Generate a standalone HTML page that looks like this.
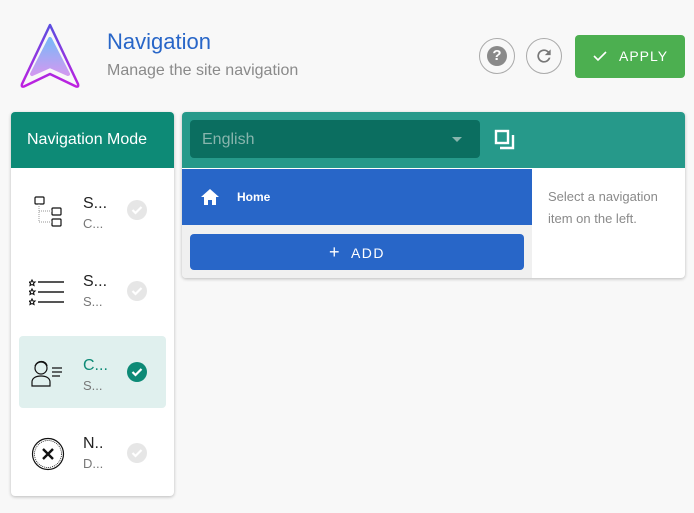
<!DOCTYPE html>
<html><head><style>
*{box-sizing:border-box;margin:0;padding:0}
body{width:694px;height:513px;background:#f8f8f8;font-family:"Liberation Sans",sans-serif;position:relative;overflow:hidden}
.abs{position:absolute}
.card{background:#fff;border-radius:4px;box-shadow:0 1px 3px rgba(0,0,0,.25)}
.item{position:absolute;left:8px;width:147px;height:72px}
.t1{position:absolute;left:64px;font-size:16px;color:#222}
.t2{position:absolute;left:64px;font-size:13px;color:#777}
.chk{position:absolute;left:108px;width:20px;height:20px;border-radius:50%;background:#e6e6e6}
</style></head><body>
<svg class="abs" style="left:18px;top:22px" width="64" height="70" viewBox="0 0 64 70">
<defs><linearGradient id="g" x1="0" y1="0" x2="0" y2="1"><stop offset="0" stop-color="#5b4ee0"/><stop offset="1" stop-color="#c020e0"/></linearGradient>
<linearGradient id="g2" x1="0" y1="0" x2="0" y2="1"><stop offset="0" stop-color="#7ab8f8"/><stop offset="1" stop-color="#d09af0"/></linearGradient></defs>
<path d="M32 3 L60 62 Q61 66 57 64 L32 52 L7 64 Q3 66 4 62 Z" fill="none" stroke="url(#g)" stroke-width="2.5" stroke-linejoin="round"/>
<path d="M32 17 L50 52 L32 44 L14 52 Z" fill="url(#g2)" stroke="url(#g2)" stroke-width="4" stroke-linejoin="round"/>
</svg>
<div class="abs" style="left:107px;top:29px;font-size:22px;color:#2866c8">Navigation</div>
<div class="abs" style="left:107px;top:62px;font-size:16px;color:#8a8a8a">Manage the site navigation</div>
<div class="abs" style="left:479px;top:38px;width:36px;height:36px;border:1px solid #aaa;border-radius:50%"></div>
<div class="abs" style="left:487px;top:46px;width:20px;height:20px;border-radius:50%;background:#8a8a8a;color:#fff;font-size:15px;font-weight:bold;text-align:center;line-height:20px">?</div>
<div class="abs" style="left:526px;top:38px;width:36px;height:36px;border:1px solid #aaa;border-radius:50%"></div>
<svg class="abs" style="left:534px;top:46px" width="20" height="20" viewBox="0 0 24 24"><path fill="#777" d="M17.65 6.35A7.96 7.96 0 0 0 12 4a8 8 0 1 0 7.73 10h-2.08A6 6 0 1 1 12 6c1.66 0 3.14.69 4.22 1.78L13 11h7V4z"/></svg>
<div class="abs" style="left:575px;top:35px;width:110px;height:43px;background:#4caf50;border-radius:4px;color:#fff;font-size:14px;letter-spacing:1px;line-height:43px;padding-left:18px">
<svg width="14" height="12" viewBox="0 0 14 12" style="vertical-align:-1px;margin-right:12px"><path d="M1 6 L5 10 L13 2" stroke="#fff" stroke-width="1.6" fill="none"/></svg>APPLY</div>

<div class="abs card" style="left:11px;top:112px;width:163px;height:384px;overflow:hidden">
<div style="height:56px;background:#0d8a76;color:#fff;font-size:16px;padding:19px 0 0 16px">Navigation Mode</div>
<div class="item" style="top:62px">
<svg class="abs" style="left:13px;top:22px" width="32" height="32" viewBox="0 0 32 32" fill="none" stroke="#111" stroke-width="1.2"><rect x="3" y="1" width="9" height="7" rx="1"/><rect x="20" y="12" width="9" height="7" rx="1"/><rect x="20" y="23" width="9" height="7" rx="1"/><path d="M7 8 V26 H20 M7 15 H20" stroke="#aaa" stroke-dasharray="1 1"/></svg>
<div class="t1" style="top:21px">S...</div><div class="t2" style="top:42px">C...</div><div class="chk" style="top:26px"><svg width="20" height="20" viewBox="0 0 20 20"><path d="M5.5 10l3 3 6-6" stroke="#fff" stroke-width="2.2" fill="none"/></svg></div></div>
<div class="item" style="top:143px">
<svg class="abs" style="left:10px;top:22px" width="36" height="30" viewBox="0 0 36 30" fill="none" stroke="#111" stroke-width="1.1"><path d="M3 3l1 2 2 0-1.5 1.5 .5 2-2-1-2 1 .5-2L0 5l2 0z M3 12l1 2 2 0-1.5 1.5 .5 2-2-1-2 1 .5-2L0 14l2 0z M3 22l1 2 2 0-1.5 1.5 .5 2-2-1-2 1 .5-2L0 24l2 0z"/><path d="M9 5h26M9 15h26M9 25h26" stroke-width="2" stroke="#555"/></svg>
<div class="t1" style="top:18px">S...</div><div class="t2" style="top:39px">S...</div><div class="chk" style="top:26px"><svg width="20" height="20" viewBox="0 0 20 20"><path d="M5.5 10l3 3 6-6" stroke="#fff" stroke-width="2.2" fill="none"/></svg></div></div>
<div class="item" style="top:224px;background:#e0f0ee;border-radius:4px">
<svg class="abs" style="left:11px;top:21px" width="34" height="30" viewBox="0 0 34 30" fill="none" stroke="#111" stroke-width="1.2"><circle cx="11" cy="11" r="6"/><path d="M5 9c2-6 11-6 12 0M2 29v-4c0-4 4-6 9-6s9 2 9 6v4z"/><path d="M22 11h10M22 15h10M22 19h8"/></svg>
<div class="t1" style="top:21px;color:#0d8a76">C...</div><div class="t2" style="top:42px">S...</div>
<div class="chk" style="top:26px;background:#0d8a76"><svg width="20" height="20" viewBox="0 0 20 20"><path d="M5.5 10l3 3 6-6" stroke="#fff" stroke-width="2.2" fill="none"/></svg></div></div>
<div class="item" style="top:305px">
<svg class="abs" style="left:12px;top:20px" width="34" height="34" viewBox="0 0 34 34" fill="none" stroke="#111"><circle cx="17" cy="17" r="15.5" stroke-width="1.2"/><circle cx="17" cy="17" r="13.5" stroke-dasharray="1 1" stroke-width=".8"/><path d="M12 12l10 10M22 12L12 22" stroke-width="2.4"/></svg>
<div class="t1" style="top:18px">N..</div><div class="t2" style="top:39px">D...</div><div class="chk" style="top:26px"><svg width="20" height="20" viewBox="0 0 20 20"><path d="M5.5 10l3 3 6-6" stroke="#fff" stroke-width="2.2" fill="none"/></svg></div></div>
</div>

<div class="abs card" style="left:182px;top:112px;width:503px;height:166px;overflow:hidden">
<div style="height:56px;background:#26998a;position:relative">
<div class="abs" style="left:8px;top:8px;width:290px;height:38px;background:#0b6e60;border-radius:4px;color:#88b5ad;font-size:16px;padding:11px 0 0 12px">English
<div class="abs" style="left:262px;top:17px;border:5px solid transparent;border-top-color:#88b5ad;border-bottom:0"></div></div>
<svg class="abs" style="left:312px;top:17px" width="22" height="22" viewBox="0 0 22 22" fill="none" stroke="#fff" stroke-width="2.4"><rect x="2" y="2" width="12" height="12"/><path d="M19 6v13H6"/></svg>
</div>
<div class="abs" style="left:0;top:57px;width:350px;height:109px;background:#f0f0f0"></div>
<div class="abs" style="left:0;top:57px;width:350px;height:56px;background:#2866c8;color:#fff;font-size:12px;font-weight:bold">
<svg class="abs" style="left:18px;top:19px" width="20" height="18" viewBox="0 0 20 18"><path d="M10 1L1 9h3v8h4v-5h4v5h4V9h3z" fill="#fff"/></svg>
<span class="abs" style="left:55px;top:21px">Home</span></div>
<div class="abs" style="left:8px;top:122px;width:334px;height:36px;background:#2866c8;border-radius:4px;color:#fff;font-size:14px;letter-spacing:1.5px;text-align:center;line-height:36px"><span style="font-size:18px;font-weight:normal;margin-right:10px">+</span>ADD</div>
<div class="abs" style="left:366px;top:74px;font-size:13px;color:#8a8a8a;line-height:22px">Select a navigation<br>item on the left.</div>
</div>
</body></html>
